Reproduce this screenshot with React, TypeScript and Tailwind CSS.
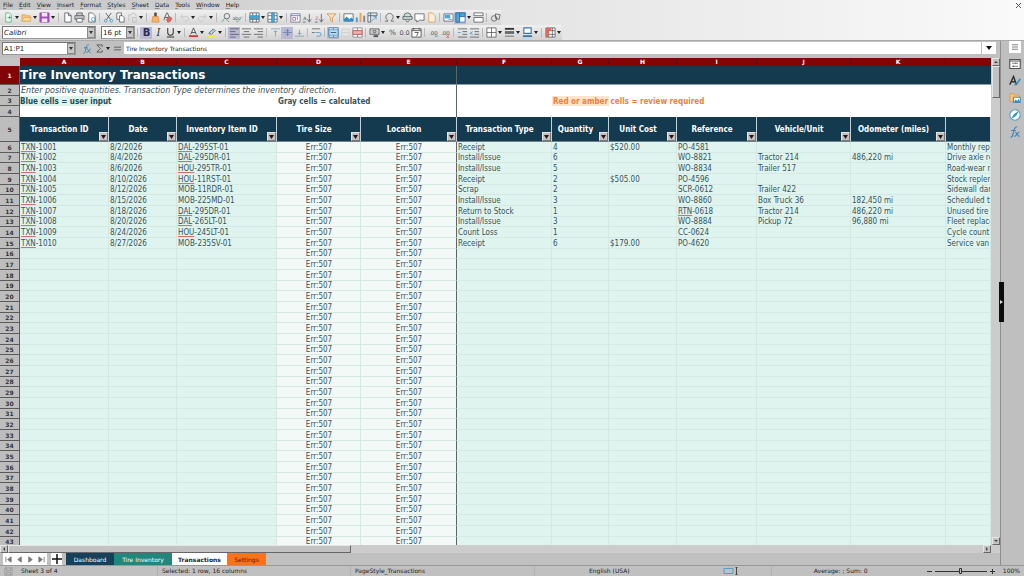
import React from "react";

type Children = { children?: React.ReactNode };

const MENUS = ["File", "Edit", "View", "Insert", "Format", "Styles", "Sheet", "Data", "Tools", "Window", "Help"];

const INK = "#4a4f55";
const BLUE = "#2f8fc4";

function Glyph({ children }: Children) {
  return (
    <svg viewBox="0 0 12 12" className="size-[11px]" fill="none" stroke={INK} strokeWidth="0.8" aria-hidden="true">
      {children}
    </svg>
  );
}

function Txt({ children, fill = INK, size = 8, x = 6 }: Children & { fill?: string; size?: number; x?: number }) {
  return (
    <text x={x} y="9" fontSize={size} fill={fill} stroke="none" textAnchor="middle" fontFamily="DejaVu Sans">
      {children}
    </text>
  );
}

const ICONS: Record<string, React.ReactNode> = {
  "New": <><path d="M3 1h4l2 2v8H3z" stroke="#3fae72" fill="#eefaf2" /><path d="M5 6h4M7 4v4" stroke="#2fa566" /></>,
  "Open": <><path d="M1 10V3h4l1 1h4v6z" fill="#f7c77e" stroke="#e0a050" /><path d="M1 10l2-4h8l-1 4z" fill="#fbd9a4" stroke="#e0a050" /></>,
  "Save": <><path d="M1 1h10v10H1z" fill="#a94fc0" stroke="#9640b0" /><path d="M3 1h6v4H3zM3 7h6v4H3z" fill="#f4e6f7" stroke="none" /></>,
  "Export PDF": <path d="M3 1h4l3 3v7H3zM7 1v3h3" fill="#fff" />,
  "Print": <><path d="M3 4V1h6v3M3 8H1V4h10v4H9" fill="#c8c8c8" /><path d="M3 7h6v4H3z" fill="#fff" /></>,
  "Print Preview": <><path d="M3 1h4l3 3v7H3z" fill="#fff" /><circle cx="8" cy="8" r="2" stroke={BLUE} /></>,
  "Cut": <><path d="M3 1l5 7M9 1L4 8" stroke="#3c4248" /><circle cx="3" cy="9.500" r="1.500" stroke={BLUE} /><circle cx="9" cy="9.500" r="1.500" stroke={BLUE} /></>,
  "Copy": <><path d="M2 1h5v7H2z" fill="#fff" /><path d="M5 4h3l2 2v5H5z" fill="#fff" /></>,
  "Paste": <path d="M2 10V3h3a2 2 0 014 0h1v2M6 6h4v5H6z" stroke="#b8b8b8" />,
  "Clone Formatting": <><path d="M5 1h2v4H5z" fill="#555" /><path d="M3 5h6l1 6H2z" fill="#f5b36c" stroke="#df8e3f" /></>,
  "Clear Formatting": <><path d="M2 9L5 1h1l3 8M3 6h5" stroke="#3c4248" /><path d="M5 8l3-3 3 2-3 4H6z" fill="#e86464" stroke="#c94848" /></>,
  "Undo": <path d="M2 5h6a2 2 0 010 5H6M4 2L2 5l3 3" stroke="#c2c2c2" />,
  "Redo": <path d="M10 5H4a2 2 0 000 5h2M8 2l2 3-3 3" stroke="#c2c2c2" />,
  "Find and Replace": <><circle cx="7.500" cy="4.500" r="3" /><path d="M5 7l-3 4M7 8l3 3" stroke="#3a9d6b" /></>,
  "Spelling": <><Txt size={5} x={5}>abc</Txt><path d="M4 9l2 2 5-6" stroke="#5aa87c" /></>,
  "Row": <><path d="M1 1h10v10H1zM1 8h10M4 1v10M8 1v10" fill="#fff" /><path d="M1 4h10v3H1z" fill="#4aa7d8" stroke={BLUE} /></>,
  "Column": <><path d="M1 1h10v10H1zM1 4h10M1 8h10" fill="#fff" /><path d="M5 1h3v10H5z" fill="#4aa7d8" stroke={BLUE} /></>,
  "Sort": <><path d="M1 2h10v9H1zM1 4h10" fill="#fff" stroke="#5b5f8c" /><path d="M3 6h3v3H3z" stroke="#b05090" /><path d="M8 5v4" stroke={BLUE} /></>,
  "Sort Ascending": <><Txt size={5} x={3}>A</Txt><path d="M1 11h3M8 2v8M6 8l2 3 2-3" /></>,
  "Sort Descending": <><Txt size={5} x={3} fill="#c24d7c">Z</Txt><path d="M1 11h3M8 2v8M6 8l2 3 2-3" /></>,
  "AutoFilter": <path d="M1 2h10L7 6v5L5 9V6z" fill="#fbe3c4" stroke="#d38a3a" />,
  "Image": <><path d="M1 2h10v8H1z" fill="#fff" /><path d="M1 10V8l3-3 3 3 2-2 2 2v2z" fill={BLUE} stroke="none" /></>,
  "Chart": <><path d="M1 6h2v5H1z" fill="#3fa0d0" stroke="none" /><path d="M5 1h2v10H5z" fill="#f0a050" stroke="none" /><path d="M9 4h2v7H9z" fill="#888" stroke="none" /></>,
  "Pivot Table": <><path d="M1 1h10v3H4v7H1zM4 1v3H1" fill="#d8ecf6" /><path d="M5 10l5-5M7 5h3v3" stroke={BLUE} /></>,
  "Special Character": <path d="M1 10h3V9a4 4 0 114 0v1h3" />,
  "Hyperlink": <><path d="M2 5a4 4 0 018 0M1 5h10v3H1z" fill="#c9dfd8" /><path d="M4 9c0 2 4 2 4 0" /></>,
  "Comment": <path d="M1 2h10v7H6l-3 2V9H1z" fill="#fff" />,
  "Headers and Footers": <path d="M3 1h4l3 3v7H3z" fill="#fff3e2" stroke="#e0923a" />,
  "Print Area": <><path d="M1 2h10v8H1z" fill="#fff" /><path d="M2 3h6v4H2z" fill="#4aa7d8" stroke="none" /><path d="M6 8h4" stroke={BLUE} /></>,
  "Freeze": <><path d="M1 1h10v10H1zM1 5h10M5 1v10" fill="#fff" stroke="#2f6fa8" /><path d="M1 1h4v10H1zM5 1h6v4H5z" fill="#4aa7d8" stroke="#2f6fa8" /></>,
  "Split Window": <><path d="M1 1h10v3H1zM1 6h10v5H1z" fill="#fff" /></>,
  "Draw Functions": <><circle cx="4.500" cy="7" r="3" /><path d="M6 2l5 1-1 5-4-1z" /></>,
  "Bold": <text x="6" y="10" fontSize="11" fontWeight="bold" fill="#2b2f55" stroke="none" textAnchor="middle" fontFamily="DejaVu Sans">B</text>,
  "Italic": <text x="6" y="10" fontSize="11" fontStyle="italic" fill="#333" stroke="none" textAnchor="middle" fontFamily="DejaVu Serif">I</text>,
  "Underline": <path d="M3 1v5a3 3 0 006 0V1M2 11h8" stroke="#333" strokeWidth="1.100" />,
  "Font Color": <><path d="M3 8l3-7 3 7M4 6h4" stroke="#333" /><path d="M1 9h10v2H1z" fill="#d63333" stroke="none" /></>,
  "Highlighting": <><path d="M3 7l5-5 2 2-4 4z" fill="#b9d6e8" /><path d="M1 9h10v2H1z" fill="#f3ea2c" stroke="none" /></>,
  "Align Left": <path d="M1 2h10M1 5h6M1 8h10M1 11h6" />,
  "Center": <path d="M1 2h10M3 5h6M1 8h10M3 11h6" />,
  "Align Right": <path d="M1 2h10M5 5h6M1 8h10M5 11h6" />,
  "Align Top": <path d="M1 2h10M6 4v6M4 5h4" stroke="#7096b0" />,
  "Center Vertically": <path d="M1 6h10M6 2v8M4 4h4M4 8h4" stroke="#5d78b8" />,
  "Align Bottom": <path d="M1 10h10M6 3v6M4 7h4" stroke="#7096b0" />,
  "Wrap Text": <><path d="M1 2h9M1 6h3" /><path d="M5 6h4a2 2 0 010 4H6" stroke={BLUE} /></>,
  "Merge and Center": <><path d="M1 1h10v10H1zM6 1v2M6 9v2" fill="#fff" stroke="#3a6f9c" /><path d="M1 3h10v6H1z" fill="#b9def2" stroke={BLUE} /><path d="M3 6h6" stroke="#235" /></>,
  "Merge Cells": <path d="M2 2h8v8H2zM2 6h8" stroke="#cbcbcb" fill="#e3e3e3" />,
  "Unmerge Cells": <><path d="M1 1h10v10H1zM6 1v10M1 4h10M1 8h10" fill="#fff" stroke="#777" /><path d="M1 4h10v4H1z" fill="#f6b0b0" stroke="#d04545" /></>,
  "Currency": <><path d="M1 2h10v6H1z" fill="#ccc" /><circle cx="6" cy="5" r="1.500" /><path d="M5 10h5" strokeWidth="2" /></>,
  "Percent": <Txt>%</Txt>,
  "Number": <Txt size={7}>0.0</Txt>,
  "Date": <><path d="M1 2h10v9H1zM1 4h10M3 1v2M9 1v2" fill="#fff" stroke="#333" /><path d="M4 6h4l-2 4" stroke="#333" /></>,
  "Add Decimal Place": <><Txt size={6}>.00</Txt><path d="M7 10h4" stroke={BLUE} /></>,
  "Delete Decimal Place": <><Txt size={6}>.00</Txt><path d="M7 9l3 3M10 9l-3 3" stroke="#d04545" /></>,
  "Increase Indent": <><path d="M1 2h10M6 5h5M6 8h5M1 11h10" /><path d="M1 6h3" stroke={BLUE} /></>,
  "Decrease Indent": <><path d="M1 2h10M6 5h5M6 8h5M1 11h10" /><path d="M4 5L1 7l3 1" stroke={BLUE} /></>,
  "Borders": <path d="M1 1h10v10H1zM6 1v10M1 6h10" fill="#fff" />,
  "Border Style": <><path d="M1 2h10" strokeWidth="2" stroke="#333" /><path d="M1 6h10" strokeWidth="3" stroke="#666" /><path d="M1 10h10" /></>,
  "Border Color": <><path d="M2 1h8v6H2z" fill="#fff" stroke="#3478b0" strokeWidth="1.200" /><path d="M1 9h10v2H1z" fill="#3478b0" stroke="none" /></>,
  "Conditional": <><path d="M1 1h10v10H1zM4 1v10M8 1v10M1 4h10M1 8h10" fill="#fff" /><path d="M1 1h6v3H1zM1 4h3v7H1z" fill="#dd6a5c" stroke="none" /></>,
};

function Caret({ label }: { label: string }) {
  return (
    <button type="button" aria-label={label} className="flex h-[12px] w-[6px] items-center justify-center">
      <svg viewBox="0 0 4 3" className="h-[3px] w-[4px]" aria-hidden="true">
        <path d="M0 0h4L2 3z" fill="#222" />
      </svg>
    </button>
  );
}

/* "|" draws a separator, "v" a drop-down arrow, "*" before a name marks a pressed button. */
function Tools({ items }: { items: string[] }) {
  return (
    <>
      {items.map((item, i) => {
        if (item === "|")
          return (
            <span key={i} className="flex h-[9px] w-[5px] justify-center">
              <span className="w-px bg-[#b9b9b9]" />
            </span>
          );
        if (item === "v") return <Caret key={i} label={`${items[i - 1].replace("*", "")} options`} />;
        const on = item.startsWith("*");
        const name = on ? item.slice(1) : item;
        return (
          <button
            key={i}
            type="button"
            aria-label={name}
            className={`flex h-[12px] w-[12px] items-center justify-center ${on ? "bg-[#b9b9d3]" : ""}`}
          >
            <Glyph>{ICONS[name]}</Glyph>
          </button>
        );
      })}
    </>
  );
}

const STANDARD = [
  "New", "v", "Open", "v", "Save", "v", "|", "Export PDF", "Print", "Print Preview", "|", "Cut", "Copy", "Paste", "v", "|",
  "Clone Formatting", "Clear Formatting", "|", "Undo", "v", "Redo", "v", "|", "Find and Replace", "Spelling", "|",
  "Row", "v", "Column", "v", "|", "Sort", "Sort Ascending", "Sort Descending", "AutoFilter", "|", "Image", "Chart",
  "Pivot Table", "|", "Special Character", "v", "Hyperlink", "Comment", "Headers and Footers", "|", "Print Area",
  "*Freeze", "v", "Split Window", "|", "Draw Functions",
];

const FORMATTING = [
  "|", "*Bold", "Italic", "Underline", "v", "|", "Font Color", "v", "Highlighting", "v", "|", "*Align Left", "Center",
  "Align Right", "|", "Align Top", "*Center Vertically", "Align Bottom", "|", "Wrap Text", "|", "*Merge and Center",
  "Merge Cells", "Unmerge Cells", "|", "Currency", "v", "Percent", "Number", "Date", "|", "Add Decimal Place",
  "Delete Decimal Place", "|", "Increase Indent", "Decrease Indent", "|", "Borders", "v", "Border Style", "v",
  "Border Color", "v", "|", "Conditional", "v",
];

function DropBox() {
  return (
    <span className="pointer-events-none flex w-[8px] shrink-0 items-center justify-center border border-[#8a8a8a] bg-[#c6c6c6]">
      <svg viewBox="0 0 4 3" className="h-[3px] w-[4px]" aria-hidden="true">
        <path d="M0 0h4L2 3z" fill="#333" />
      </svg>
    </span>
  );
}

const FIELD = "min-w-0 flex-1 appearance-none bg-white pl-px text-[7px] leading-[10px] text-[#222] outline-none";
const FRAME = "flex h-[13px] border border-t-[#777] border-l-[#777] border-r-[#999] border-b-[#999] bg-white";

type Column = { letter: string; title: string; width: string; calc?: boolean };

const COLUMNS: Column[] = [
  { letter: "A", title: "Transaction ID", width: "w-[89px]" },
  { letter: "B", title: "Date", width: "w-[68px]" },
  { letter: "C", title: "Inventory Item ID", width: "w-[100px]" },
  { letter: "D", title: "Tire Size", width: "w-[84px]", calc: true },
  { letter: "E", title: "Location", width: "w-[96px]", calc: true },
  { letter: "F", title: "Transaction Type", width: "w-[95px]" },
  { letter: "G", title: "Quantity", width: "w-[57px]" },
  { letter: "H", title: "Unit Cost", width: "w-[68px]" },
  { letter: "I", title: "Reference", width: "w-[80px]" },
  { letter: "J", title: "Vehicle/Unit", width: "w-[94px]" },
  { letter: "K", title: "Odometer (miles)", width: "w-[95px]" },
  { letter: "", title: "", width: "" },
];

const E = "Err:507";
const DATA: string[][] = [
  ["TXN-1001", "8/2/2026", "DAL-295ST-01", E, E, "Receipt", "4", "$520.00", "PO-4581", "", "", "Monthly replenishment"],
  ["TXN-1002", "8/4/2026", "DAL-295DR-01", E, E, "Install/Issue", "6", "", "WO-8821", "Tractor 214", "486,220 mi", "Drive axle replacement"],
  ["TXN-1003", "8/6/2026", "HOU-295TR-01", E, E, "Install/Issue", "5", "", "WO-8834", "Trailer 517", "", "Road-wear replacement"],
  ["TXN-1004", "8/10/2026", "HOU-11RST-01", E, E, "Receipt", "2", "$505.00", "PO-4596", "", "", "Stock replenishment"],
  ["TXN-1005", "8/12/2026", "MOB-11RDR-01", E, E, "Scrap", "2", "", "SCR-0612", "Trailer 422", "", "Sidewall damage"],
  ["TXN-1006", "8/15/2026", "MOB-225MD-01", E, E, "Install/Issue", "3", "", "WO-8860", "Box Truck 36", "182,450 mi", "Scheduled tire service"],
  ["TXN-1007", "8/18/2026", "DAL-295DR-01", E, E, "Return to Stock", "1", "", "RTN-0618", "Tractor 214", "486,220 mi", "Unused tire returned"],
  ["TXN-1008", "8/20/2026", "DAL-265LT-01", E, E, "Install/Issue", "3", "", "WO-8884", "Pickup 72", "96,880 mi", "Fleet replacement"],
  ["TXN-1009", "8/24/2026", "HOU-245LT-01", E, E, "Count Loss", "1", "", "CC-0624", "", "", "Cycle count adjustment"],
  ["TXN-1010", "8/27/2026", "MOB-235SV-01", E, E, "Receipt", "6", "$179.00", "PO-4620", "", "", "Service van stock"],
];
const BLANK = ["", "", "", E, E, "", "", "", "", "", "", ""];
const LAST_ROW = 43;

function CellText({ text }: { text: string }) {
  const m = /^(TXN|DAL|HOU|RTN)(.*)$/.exec(text);
  if (!m) return <>{text}</>;
  return (
    <>
      <span className="underline decoration-[#dc6c6c] decoration-1 underline-offset-1">{m[1]}</span>
      {m[2]}
    </>
  );
}

function RowNumber({ n, selected }: { n: number; selected?: boolean }) {
  return (
    <th
      scope="row"
      className={`border-r border-b border-[#5c5c5c] text-center font-['DejaVu_Sans'] text-[6px] leading-[9px] font-bold ${
        selected ? "bg-[#820505] text-white" : "bg-[#bdbdbd] text-[#333]"
      }`}
    >
      {n}
    </th>
  );
}

function Sheet() {
  const freeze = "border-r border-r-[#5b6668]";
  return (
    <table className="w-full table-fixed border-separate border-spacing-0 font-['DejaVu_Sans_Condensed','DejaVu_Sans',sans-serif] text-[8px] leading-[9px] text-[#38535b] [&_td]:p-0 [&_th]:p-0">
      <colgroup>
        <col className="w-[20px]" />
        {COLUMNS.map((c, i) => (
          <col key={i} className={c.width} />
        ))}
      </colgroup>
      <thead>
        <tr className="h-[8px] text-[6px] leading-[7px] text-white">
          <th className="bg-[#c4c4c4]" />
          {COLUMNS.map((c, i) => (
            <th key={i} scope="col" className="border-r border-b border-r-[#5e0810] border-b-[#4d1a20] bg-[#820505] text-center font-['DejaVu_Sans'] font-bold">
              {c.letter}
            </th>
          ))}
        </tr>
      </thead>
      <tbody>
        <tr className="h-[19px]">
          <RowNumber n={1} selected />
          <td colSpan={5} className={`border-b border-b-[#8fa0a8] bg-[#143a50] font-['DejaVu_Sans'] text-[12px] leading-[18px] font-bold whitespace-nowrap text-white ${freeze}`}>
            Tire Inventory Transactions
          </td>
          <td colSpan={7} className="border-b border-b-[#8fa0a8] bg-[#143a50]" />
        </tr>
        <tr className="h-[11px]">
          <RowNumber n={2} />
          <td colSpan={5} className={`bg-white font-['DejaVu_Sans'] whitespace-nowrap italic ${freeze}`}>
            <span className="pl-px">Enter positive quantities. Transaction Type determines the inventory direction.</span>
          </td>
          <td colSpan={7} className="bg-white" />
        </tr>
        <tr className="h-[10px] font-bold whitespace-nowrap">
          <RowNumber n={3} />
          <td className="bg-[#dff3ef] text-[#1f4c58]">Blue cells = user input</td>
          <td colSpan={2} />
          <td colSpan={2} className={freeze}>
            <span className="pl-px">Gray cells = calculated</span>
          </td>
          <td />
          <td className="bg-[#fde4cf] text-[#e8833a]">
            <span className="pl-px">Red or amber cells = review required</span>
          </td>
          <td colSpan={5} />
        </tr>
        <tr className="h-[11px]">
          <RowNumber n={4} />
          <td colSpan={5} className={`bg-white ${freeze}`} />
          <td colSpan={7} className="bg-white" />
        </tr>
        <tr className="h-[25px]">
          <RowNumber n={5} />
          {COLUMNS.map((c, i) => (
            <th key={i} className="border-r border-b border-r-[#c3d2d6] border-b-[#6f8288] bg-[#143a50] text-[8px] font-bold whitespace-nowrap text-white">
              {c.title && (
                <div className="flex h-[24px] items-center">
                  <span className="flex-1 text-center">{c.title}</span>
                  <button
                    type="button"
                    aria-label={`Filter ${c.title}`}
                    className="flex h-[9px] w-[9px] items-center justify-center self-end border border-[#e4e4e4] border-r-[#777] border-b-[#777] bg-[#c4c0bf]"
                  >
                    <svg viewBox="0 0 5 4" className="h-[4px] w-[5px]" aria-hidden="true">
                      <path d="M0 0h5L2.500 4z" fill="#2a1515" />
                    </svg>
                  </button>
                </div>
              )}
            </th>
          ))}
        </tr>
        {Array.from({ length: LAST_ROW - 5 }, (_, r) => (
          <tr key={r} className={r % 3 === 1 ? "h-[10px]" : "h-[11px]"}>
            <RowNumber n={r + 6} />
            {(DATA[r] ?? BLANK).map((text, i) => (
              <td
                key={i}
                className={`overflow-hidden border-b border-[#d5e9e4] whitespace-nowrap ${
                  COLUMNS[i].calc ? "bg-[#f3f9f7] text-center" : "bg-[#dff3ef]"
                } ${i === 4 ? "border-r border-r-[#5b6668]" : "border-r"}`}
              >
                <span className="pl-px">
                  <CellText text={text} />
                </span>
              </td>
            ))}
          </tr>
        ))}
      </tbody>
    </table>
  );
}

const RAISED = "border border-t-[#e6e6e6] border-l-[#e6e6e6] border-r-[#666] border-b-[#666] bg-[#c2c2c2]";

function ScrollButton({ label, d }: { label: string; d: string }) {
  return (
    <button type="button" aria-label={label} className={`flex h-[8px] w-[8px] shrink-0 items-center justify-center ${RAISED}`}>
      <svg viewBox="0 0 4 4" className="size-[4px]" aria-hidden="true">
        <path d={d} fill="#444" />
      </svg>
    </button>
  );
}

const SIDE: [string, React.ReactNode][] = [
  ["Sidebar Settings", <><path d="M0 0h16v16H0z" fill="#fff" stroke="none" /><path d="M4 5h8M4 8h8M4 11h8" /></>],
  ["Properties", <><path d="M1 2h14v12H1zM1 4h14" fill="#fff" strokeWidth="1.500" /><path d="M4 7h8M4 11h8M9 6v2M6 10v2" /></>],
  ["Styles", <><path d="M1 13L6 2l4 11M3 9h6" stroke="#333" strokeWidth="2" /><path d="M8 14c0-4 3-3 3-3l4-6" stroke={BLUE} strokeWidth="2" /></>],
  ["Gallery", <><path d="M1 13V2h5l1 2h7v9z" fill="#f4c079" stroke="#d9964a" /><path d="M6 7h9v7H6z" fill="#fff" stroke="#2f6f9c" /><path d="M6 14l3-4 2 2 2-3 2 5z" fill={BLUE} stroke="none" /></>],
  ["Navigator", <><circle cx="8" cy="8" r="7" fill="#fff" stroke="#4c9fc8" strokeWidth="1.500" /><path d="M12 4L9 9l-5 3 3-5z" fill={BLUE} stroke={BLUE} /></>],
  ["Functions", <path d="M2 15c3 0 3-2 4-7s2-7 5-7M3 6h6M8 8c3 0 3 6 6 6M14 8c-3 0-4 6-7 6" stroke="#3b86b8" strokeWidth="1.500" />],
];

function Sidebar() {
  return (
    <aside className="relative w-[24px] shrink-0 border-l border-[#8d8d8d] bg-[#bfbfbf]">
      <div className="flex flex-col items-center gap-[5px] pl-[5px]">
        {SIDE.map(([label, art]) => (
          <button key={label} type="button" aria-label={label} className="flex size-[12px] items-center justify-center">
            <svg viewBox="0 0 16 16" className="size-[12px]" fill="none" stroke="#555" aria-hidden="true">
              {art}
            </svg>
          </button>
        ))}
      </div>
      <button
        type="button"
        aria-label="Hide sidebar"
        className="absolute top-[46%] -left-[2px] flex h-[40px] w-[5px] items-center justify-center bg-[#0c0c0c]"
      >
        <svg viewBox="0 0 3 4" className="h-[4px] w-[3px]" aria-hidden="true">
          <path d="M0 0l3 2-3 2z" fill="#ddd" />
        </svg>
      </button>
    </aside>
  );
}

const NAV: [string, string][] = [
  ["First sheet", "M1 1v6M7 1v6L3 4z"],
  ["Previous sheet", "M6 1v6L2 4z"],
  ["Next sheet", "M2 1v6l4-3z"],
  ["Last sheet", "M7 1v6M1 1v6l4-3z"],
];

function SheetTabs() {
  return (
    <nav aria-label="Sheets" className="flex h-[12px] shrink-0 items-stretch bg-[#c0c0c0] pl-[3px] text-[6px]">
      <div className="flex bg-white">
        {NAV.map(([label, d]) => (
          <button key={label} type="button" aria-label={label} className="flex w-[11px] items-center justify-center">
            <svg viewBox="0 0 8 8" className="size-[7px]" fill="#777" stroke="#777" aria-hidden="true">
              <path d={d} />
            </svg>
          </button>
        ))}
      </div>
      <button type="button" aria-label="Add sheet" className="mx-[4px] flex w-[11px] items-center justify-center bg-white">
        <svg viewBox="0 0 10 10" className="size-[10px]" stroke="#111" strokeWidth="1.500" aria-hidden="true">
          <path d="M5 0v10M0 5h10" />
        </svg>
      </button>
      <button type="button" className="w-[48px] bg-[#17405a] text-white">Dashboard</button>
      <button type="button" className="w-[58px] bg-[#23857b] text-white">Tire Inventory</button>
      <button type="button" aria-current="page" className="w-[55px] bg-white font-bold text-[#222]">Transactions</button>
      <button type="button" className="w-[39px] bg-[#f8731c] text-[#3d2415]">Settings</button>
    </nav>
  );
}

export default function App() {
  return (
    <div
      className="flex h-screen flex-col overflow-hidden bg-[#c0c0c0] font-['DejaVu_Sans',sans-serif] text-[6px] text-[#222]"
    >
      <header className="bg-linear-to-r from-[#c4c4c4] via-[#e4e4e4] to-[#fafafa]">
        <div className="flex h-[10px] items-center justify-between px-[3px]">
          <nav aria-label="Menu" className="flex gap-[6px] leading-[10px]">
            {MENUS.map((m) => (
              <button key={m} type="button">
                <span className="underline decoration-[#888] decoration-1 underline-offset-1">{m[0]}</span>
                {m.slice(1)}
              </button>
            ))}
          </nav>
          <button type="button" aria-label="Close document">
            <svg viewBox="0 0 5 5" className="size-[5px]" stroke="#555" aria-hidden="true">
              <path d="M0 0l5 5M5 0L0 5" />
            </svg>
          </button>
        </div>
        <div role="toolbar" aria-label="Standard" className="flex h-[15px] w-fit items-center bg-linear-to-b from-[#f0f0f0] to-[#d6d6d6] pl-[2px]">
          <Tools items={STANDARD} />
        </div>
        <div role="toolbar" aria-label="Formatting" className="flex h-[15px] w-fit items-center bg-linear-to-b from-[#f0f0f0] to-[#d2d2d2] pl-[2px]">
          <div className={`w-[94px] ${FRAME}`}>
            <select aria-label="Font name" className={`${FIELD} italic`} defaultValue="Calibri">
              <option>Calibri</option>
            </select>
            <DropBox />
          </div>
          <div className={`ml-[5px] w-[34px] ${FRAME}`}>
            <select aria-label="Font size" className={FIELD} defaultValue="16 pt">
              <option>16 pt</option>
            </select>
            <DropBox />
          </div>
          <Tools items={FORMATTING} />
        </div>
      </header>

      <div className="flex min-h-0 flex-1 border-t border-[#aaa]">
        <main className="flex min-w-0 flex-1 flex-col">
          <div className="flex h-[17px] shrink-0 items-start bg-[#c0c0c0] pt-px pl-[2px]">
            <div className={`w-[74px] ${FRAME}`}>
              <input aria-label="Name box" className={FIELD} defaultValue="A1:P1" />
              <DropBox />
            </div>
            <div className="flex h-[13px] items-center pl-[5px]">
              <button type="button" aria-label="Function wizard" className="flex w-[12px] justify-center">
                <svg viewBox="0 0 16 16" className="size-[10px]" fill="none" stroke="#3b86b8" strokeWidth="1.500" aria-hidden="true">
                  <path d="M2 15c3 0 3-2 4-7s2-7 5-7M3 6h6M8 8c3 0 3 6 6 6M14 8c-3 0-4 6-7 6" />
                </svg>
              </button>
              <button type="button" aria-label="Select function" className="flex w-[12px] justify-center">
                <svg viewBox="0 0 10 10" className="size-[9px]" fill="none" stroke="#555" aria-hidden="true">
                  <path d="M8 3V1H2l4 4-4 4h6V7" />
                </svg>
              </button>
              <Caret label="Select function options" />
              <button type="button" aria-label="Formula" className="flex w-[13px] justify-center">
                <svg viewBox="0 0 8 8" className="size-[7px]" stroke="#555" aria-hidden="true">
                  <path d="M0 2.500h8M0 5.500h8" />
                </svg>
              </button>
            </div>
            <input aria-label="Input line" className="h-[12px] min-w-0 flex-1 bg-white pl-[2px] text-[#222] outline-none" defaultValue="Tire Inventory Transactions" />
            <button type="button" aria-label="Expand formula bar" className="mr-[4px] ml-[1px] flex h-[12px] w-[14px] items-center justify-center bg-white">
              <svg viewBox="0 0 6 4" className="h-[4px] w-[6px]" aria-hidden="true">
                <path d="M0 0h6L3 4z" fill="#111" />
              </svg>
            </button>
          </div>

          <div className="flex min-h-0 flex-1">
            <div className="min-w-0 flex-1 overflow-hidden bg-white">
              <Sheet />
            </div>
            <div className="flex w-[9px] flex-col items-end bg-[#cbcccb]">
              <ScrollButton label="Scroll up" d="M0 3h4L2 1z" />
              <div className={`h-[32px] w-[8px] ${RAISED}`} />
              <div className="flex-1" />
              <ScrollButton label="Scroll down" d="M0 1h4L2 3z" />
            </div>
          </div>

          <div className="flex h-[8px] shrink-0 bg-[#cbcccb] pr-[9px]">
            <ScrollButton label="Scroll left" d="M3 0v4L1 2z" />
            <div className={`w-[343px] ${RAISED}`} />
            <div className="flex-1" />
            <ScrollButton label="Scroll right" d="M1 0v4l2-2z" />
          </div>
          <SheetTabs />
        </main>
        <Sidebar />
      </div>

      <footer className="flex h-[11px] shrink-0 items-center border-t border-[#999] bg-[#c0c0c0] leading-[10px]">
        <div className="flex w-[157px] items-center gap-[8px] pl-[4px]">
          <svg viewBox="0 0 10 10" className="size-[9px]" fill="none" stroke="#999" aria-hidden="true">
            <path d="M1 1h8v8H1zM3 1v3h4V1M3 9V6h4v3" />
          </svg>
          <span>Sheet 3 of 4</span>
        </div>
        <span className="w-[193px] border-l border-[#b0b0b0] pl-[4px]">Selected: 1 row, 16 columns</span>
        <span className="w-[184px] border-l border-[#b0b0b0] pl-[4px]">PageStyle_Transactions</span>
        <span className="flex-1 border-l border-[#b0b0b0] pl-[54px]">English (USA)</span>
        <div className="flex w-[48px] gap-[2px]">
          <svg viewBox="0 0 16 8" className="h-[8px] w-[16px]" fill="none" stroke="#5f9cc4" aria-hidden="true">
            <path d="M1 1.500h9v5H1z" />
            <path d="M13.500 0v8M12 0h3M12 8h3" stroke="#444" />
          </svg>
        </div>
        <span className="w-[156px] border-l border-[#b0b0b0] pl-[42px]">Average: ; Sum: 0</span>
        <div className="flex items-center gap-[2px] pr-[4px]">
          <svg viewBox="0 0 68 8" className="h-[8px] w-[68px]" fill="#c0c0c0" stroke="#333" aria-hidden="true">
            <path d="M0 4.500h5M8 4.500h52M63 4.500h5M65.500 2v5" />
            <path d="M32.500 1.500h2v5h-2z" />
          </svg>
          <span className="pl-[6px]">100%</span>
        </div>
      </footer>
    </div>
  );
}
